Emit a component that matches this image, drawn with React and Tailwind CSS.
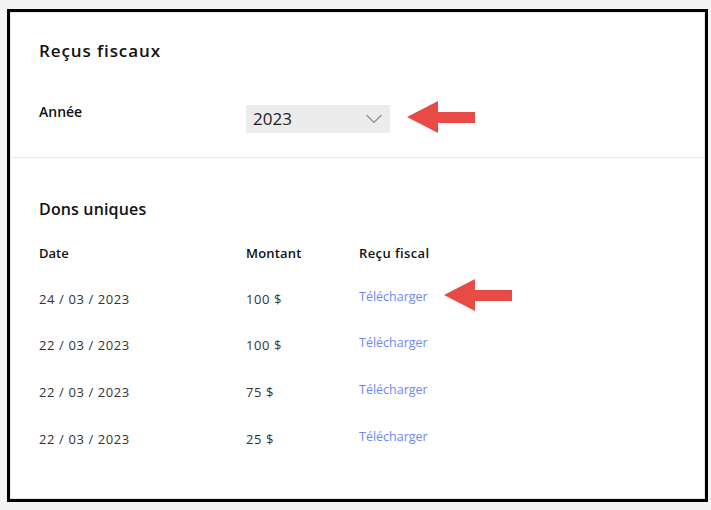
export default function App() {
  const rows = [
    ["24 / 03 / 2023", "100 $", true],
    ["22 / 03 / 2023", "100 $", false],
    ["22 / 03 / 2023", "75 $", false],
    ["22 / 03 / 2023", "25 $", false],
  ];
  const Arrow = () => (
    <svg width="68" height="32" viewBox="0 0 68 32" className="block shrink-0">
      <polygon points="0,16 31,0 31,11 68,11 68,22 31,22 31,32" fill="#e84b46" />
    </svg>
  );
  return (
    <div
      className="w-[711px] h-[510px] bg-[#f4f4f4] pt-[9px] pl-[7px] text-[#222]"
      style={{ fontFamily: '"Open Sans", sans-serif' }}
    >
      <div className="w-[701px] h-[493px] border-[3px] border-black">
        <div className="h-full border border-[#e6e6e6] bg-white flex flex-col">
          <div className="pl-[28px] pt-[26px] pb-[24px] border-b border-[#e8e8e8]">
            <h1 className="text-[17px] leading-[24px] font-semibold tracking-[0.9px] text-[#111]">Reçus fiscaux</h1>
            <div className="flex items-start mt-[39px]">
              <div className="w-[207px] text-[14px] leading-[20px] font-semibold text-[#111]">Année</div>
              <div className="mt-[2.5px] flex items-center">
                <div className="w-[144px] h-[28px] bg-[#ececec] flex items-center justify-between pl-[7px] pr-[8px]">
                  <span className="text-[17px] leading-[28px] text-[#222] pt-[1px]">2023</span>
                  <svg width="16" height="10" viewBox="0 0 16 10" className="mt-[1px]">
                    <polyline points="0.5,1 8,8.5 15.5,1" fill="none" stroke="#8c8c8c" strokeWidth="1.2" />
                  </svg>
                </div>
                <div className="ml-[17px] -mt-[4px]">
                  <Arrow />
                </div>
              </div>
            </div>
          </div>
          <div className="pl-[28px] pt-[39px]">
            <h2 className="text-[16px] leading-[24px] font-semibold tracking-[0.15px] text-[#111]">Dons uniques</h2>
            <div className="mt-[22px] grid grid-cols-[207px_113px_1fr] text-[13px] leading-[20px] font-semibold text-[#111]">
              <div>Date</div>
              <div className="tracking-[0.2px]">Montant</div>
              <div className="tracking-[0.4px]">Reçu fiscal</div>
            </div>
            <div className="mt-[26px] flex flex-col gap-[26.7px]">
              {rows.map(([d, m, arrow], i) => (
                <div key={i} className="grid grid-cols-[207px_113px_1fr] h-[20px] items-start text-[13px] leading-[20px] text-[#333]">
                  <div className="tracking-[0.6px]">{d}</div>
                  <div className="tracking-[0.6px]">{m}</div>
                  <div className="flex items-start">
                    <span className="text-[12.5px] leading-[16px] text-[#7088f2]">Télécharger</span>
                    {arrow && (
                      <div className="ml-[16px] -mt-[10px]">
                        <Arrow />
                      </div>
                    )}
                  </div>
                </div>
              ))}
            </div>
          </div>
        </div>
      </div>
    </div>
  );
}
